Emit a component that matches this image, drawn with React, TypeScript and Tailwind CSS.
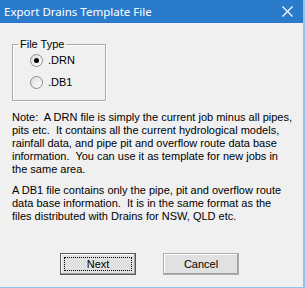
import { useState } from 'react'

type RadioProps = {
  label: string
  checked: boolean
  onSelect: () => void
}

function Radio({ label, checked, onSelect }: RadioProps) {
  return (
    <label className="flex h-[13px] cursor-default items-center gap-[5px]" onClick={onSelect}>
      <span className="flex size-[13px] items-center justify-center rounded-full border border-[#8d8d8d] bg-gradient-to-br from-[#dcdcdc] to-white">
        {checked && <span className="size-[5px] rounded-full bg-black" />}
      </span>
      <span>{label}</span>
    </label>
  )
}

export default function App() {
  const [fileType, setFileType] = useState<'drn' | 'db1'>('drn')

  return (
    <div
      className="flex h-[288px] w-[305px] flex-col border-r-2 border-b border-[#92c3ec] bg-[#f0f0f0] text-[11px] leading-[13px] text-black"
      style={{ fontFamily: 'Tahoma, "Liberation Sans", Arial, sans-serif' }}
    >
      <div className="flex h-[23px] shrink-0 items-center justify-between bg-[#2b7bcd] pr-[10px] pl-[4px] text-white">
        <span className="text-[11.5px]" style={{ fontFamily: '"Noto Sans", "Open Sans", sans-serif' }}>
          Export Drains Template File
        </span>
        <svg width="11" height="11" viewBox="0 0 11 11" aria-hidden="true">
          <path d="M0.5 0.5 L10.5 10.5 M10.5 0.5 L0.5 10.5" stroke="white" strokeWidth="1.2" />
        </svg>
      </div>

      <div className="flex flex-1 flex-col px-[12px] pt-[15px]">
        <fieldset className="h-[63px] w-[94px] border border-[#a9a9a9] shadow-[inset_1px_1px_0_#fff,1px_1px_0_#fff]">
          <legend className="ml-[5px] px-[2px]">File Type</legend>
          <div className="flex flex-col gap-[9px] pt-[3px] pl-[17px]">
            <Radio label=".DRN" checked={fileType === 'drn'} onSelect={() => setFileType('drn')} />
            <Radio label=".DB1" checked={fileType === 'db1'} onSelect={() => setFileType('db1')} />
          </div>
        </fieldset>

        <p className="mt-[10px] whitespace-nowrap">
          Note:&nbsp; A DRN file is simply the current job minus all pipes,
          <br />
          pits etc.&nbsp; It contains all the current hydrological models,
          <br />
          rainfall data, and pipe pit and overflow route data base
          <br />
          information.&nbsp; You can use it as template for new jobs in
          <br />
          the same area.
        </p>
        <p className="mt-[8px] whitespace-nowrap">
          A DB1 file contains only the pipe, pit and overflow route
          <br />
          data base information.&nbsp; It is in the same format as the
          <br />
          files distributed with Drains for NSW, QLD etc.
        </p>

        <div className="mt-auto mb-[12px] flex gap-[27px] pl-[48px]">
          <button className="flex h-[22px] w-[76px] items-center justify-center border border-[#5a5a5a] bg-[#e1e1e1] p-[3px] shadow-[inset_-1px_-1px_0_#a0a0a0,inset_1px_1px_0_#fff]">
            <span className="flex h-full w-full items-center justify-center border border-dotted border-black">Next</span>
          </button>
          <button className="flex h-[22px] w-[76px] items-center justify-center border border-[#adadad] bg-[#e1e1e1] shadow-[inset_-1px_-1px_0_#a0a0a0,inset_1px_1px_0_#fff]">
            Cancel
          </button>
        </div>
      </div>
    </div>
  )
}
